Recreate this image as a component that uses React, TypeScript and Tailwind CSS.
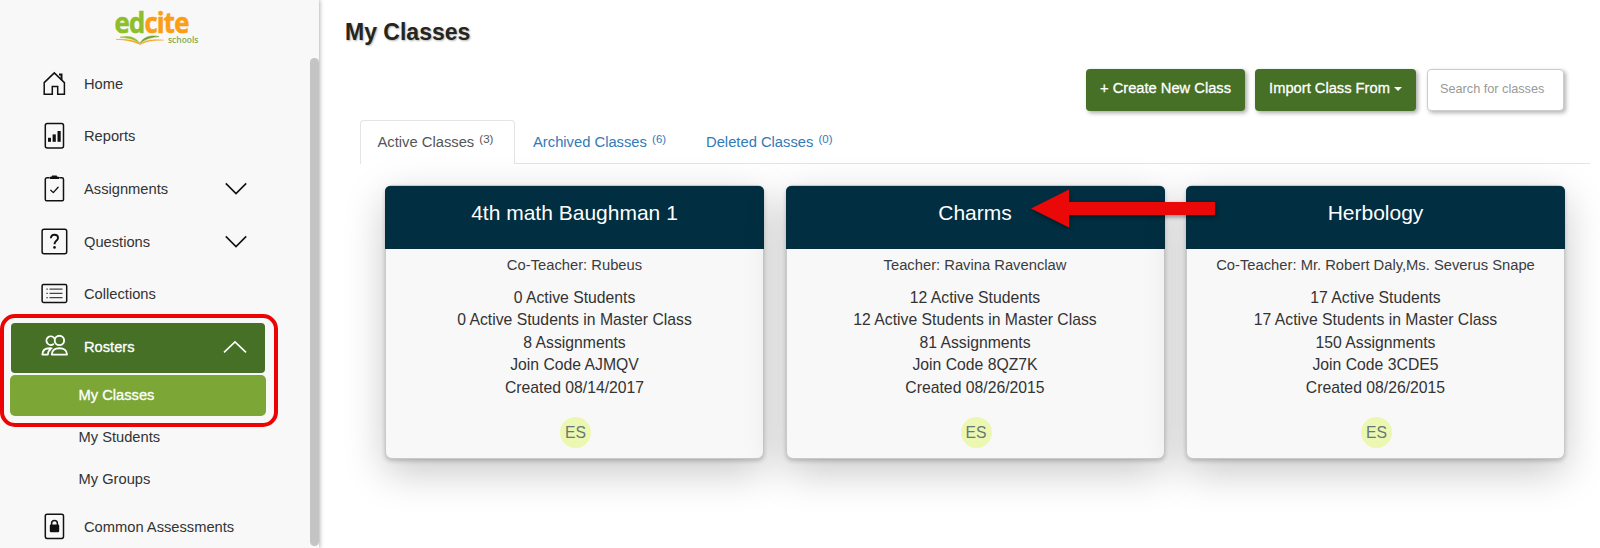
import type { ReactNode } from 'react';

const outline = {
  fill: 'none',
  stroke: 'currentColor',
  strokeWidth: 1.5,
  strokeLinecap: 'round',
  strokeLinejoin: 'round',
} as const;

const HomeIcon = () => (
  <svg width="28" height="28" viewBox="0 0 28 28" {...outline} strokeLinecap="butt" strokeLinejoin="miter">
    <path d="M4.2 12.6 14.3 2.9l10.1 9.7v11.6h-6.7v-7.6h-5.4v7.6H4.2z" />
    <path d="M19 4.6h2.5v5.4" strokeWidth="2" />
  </svg>
);

const ReportsIcon = () => (
  <svg width="28" height="28" viewBox="0 0 28 28" {...outline}>
    <rect x="5.3" y="1.4" width="18.2" height="24.6" rx="2" />
    <g fill="currentColor" stroke="none">
      <rect x="8" y="15.8" width="3" height="4" />
      <rect x="12.6" y="12.4" width="3.2" height="7.4" />
      <rect x="17.5" y="9" width="3.2" height="10.8" />
    </g>
  </svg>
);

const AssignmentsIcon = () => (
  <svg width="28" height="28" viewBox="0 0 28 28" {...outline}>
    <path d="M9 2.8H7a1.7 1.7 0 0 0-1.7 1.7v20a1.2 1.2 0 0 0 1.2 1.2h15.8a1.2 1.2 0 0 0 1.2-1.2v-20a1.7 1.7 0 0 0-1.7-1.7h-2" />
    <path d="M9.8 4.1V1.8h1.6l.8-1.2h4.4l.8 1.2h1.6v2.3z" fill="currentColor" stroke="none" />
    <path d="M10.8 15.2l2.5 2.4 4.8-5.4" strokeWidth="1.3" />
  </svg>
);

const QuestionsIcon = () => (
  <svg width="28" height="28" viewBox="0 0 28 28" {...outline}>
    <rect x="2.1" y="1.3" width="24.6" height="24.4" rx="2" />
    <path d="M10.9 10.2c0-2.1 1.3-3.5 3.5-3.5s3.6 1.3 3.6 3.2c0 2.9-3.5 3-3.5 6.3" strokeWidth="1.9" strokeLinecap="butt" />
    <circle cx="14.5" cy="19.4" r="1.3" fill="currentColor" stroke="none" />
  </svg>
);

const CollectionsIcon = () => (
  <svg width="28" height="28" viewBox="0 0 28 28" {...outline}>
    <rect x="2.1" y="4.5" width="24.6" height="18" rx="1.4" />
    <g strokeWidth="1.2" strokeLinecap="butt" className="text-[#444]">
      <path d="M9.5 9.2h13M9.5 13.4h13M9.5 17.6h13" />
      <path d="M6.4 9.2h1.4M6.4 13.4h1.4M6.4 17.6h1.4" />
    </g>
  </svg>
);

const RostersIcon = () => (
  <svg width="28" height="28" viewBox="0 0 28 28" {...outline} strokeWidth="1.9">
    <circle cx="19.4" cy="7.4" r="4.7" />
    <path d="M13.2 11.200a4.300 4.300 0 1 1 .8-6.400" />
    <path d="M11.800 21.600c0-4.200 3.300-6.400 7.600-6.400s7.600 2.200 7.600 6.400z" />
    <path d="M11.600 15.400c-.6-.1-1.200-.2-1.800-.2-4.300 0-7.400 2.200-7.400 6.400h5.400c0-2 .8-3.800 2.400-5" />
  </svg>
);

const AssessmentsIcon = () => (
  <svg width="28" height="28" viewBox="0 0 28 28" {...outline}>
    <rect x="5.3" y="1.2" width="18.2" height="24.2" rx="1.8" />
    <rect x="9.8" y="11.6" width="9.4" height="7.6" rx="1.2" fill="currentColor" stroke="none" />
    <path d="M11.6 12v-1.6a2.900 2.900 0 0 1 5.800 0V12" />
  </svg>
);

const Chevron = ({ up = false }: { up?: boolean }) => (
  <svg width="24" height="14" viewBox="0 0 24 14" {...outline} strokeWidth="1.6" strokeLinecap="butt" strokeLinejoin="miter">
    <path d={up ? 'M1 12.4 12 1.8l11 10.6' : 'M1.8 1.4 12 11.6 22.2 1.4'} />
  </svg>
);

const Logo = () => (
  <svg width="94" height="46" viewBox="-4 -11 94 46" className="ml-[111px]">
    <g fontFamily="'Open Sans', 'Noto Sans', sans-serif" fontWeight="700">
      <text
        transform="translate(-0.4 22.4) scale(0.885 1)"
        fontSize="29"
        letterSpacing="-0.9"
        fill="#8fbe2b"
        stroke="#8fbe2b"
        strokeWidth="0.6"
        strokeLinejoin="round"
      >
        ed<tspan fill="#fb9e14" stroke="#fb9e14">cite</tspan>
      </text>
      <text x="53" y="32.400" fontSize="9" fontWeight="600" textLength="30.500" lengthAdjust="spacingAndGlyphs" fill="#86a94a">schools</text>
    </g>
    <path d="M5 26.2c8-1.8 15-.6 19.6 5.8-5-3.6-11-5-19.6-5.8z" fill="#8fbe2b" stroke="#8fbe2b" strokeWidth="0.5" />
    <path d="M25 32c3.6-6 11-8.4 19-6.4-8 .6-13.5 2.6-19 6.4z" fill="#6f9f25" stroke="#6f9f25" strokeWidth="0.5" />
    <path d="M1 28.4c10-.6 18 .8 24 4 6-3.4 14-4.600 23.500-3.200-10-.4-17.500 1-23.500 4.400-6-3.200-14-4.800-24-5.200z" fill="#fb9e14" stroke="#fb9e14" strokeWidth="0.4" />
  </svg>
);

type NavItemProps = {
  icon: ReactNode;
  label: string;
  expandable?: boolean;
};

const NavItem = ({ icon, label, expandable }: NavItemProps) => (
  <a href="#" className="flex h-[52.6px] shrink-0 items-center pl-10 text-[#333]">
    <span className="mr-4 text-[#111]">{icon}</span>
    <span className="w-[140px] whitespace-nowrap">{label}</span>
    {expandable && <span className="text-[#111]"><Chevron /></span>}
  </a>
);

const Sidebar = () => (
  <aside className="relative z-10 flex w-[319px] shrink-0 bg-[#f8f8f8] text-[14.7px] shadow-[1px_0_4px_rgba(0,0,0,0.3)]">
    <div className="flex w-[310px] flex-col">
      <div className="h-[57.5px] shrink-0">
        <Logo />
      </div>
      <NavItem icon={<HomeIcon />} label="Home" />
      <NavItem icon={<ReportsIcon />} label="Reports" />
      <NavItem icon={<AssignmentsIcon />} label="Assignments" expandable />
      <NavItem icon={<QuestionsIcon />} label="Questions" expandable />
      <NavItem icon={<CollectionsIcon />} label="Collections" />

      <div className="relative mt-[2.5px] shrink-0">
        <a href="#" className="ml-[11px] flex h-[50px] w-[254px] items-center rounded-[4px] bg-[#457026] pb-[2px] pl-[29px] text-white">
          <RostersIcon />
          <span className="ml-4 w-[139px] [-webkit-text-stroke:0.3px_white]">Rosters</span>
          <Chevron up />
        </a>
        <a href="#" className="mt-[1.6px] ml-[10px] flex h-[41.4px] w-[255.5px] items-center rounded-[5px] bg-[#7ca737] pl-[68.5px] text-white [-webkit-text-stroke:0.3px_white]">
          My Classes
        </a>
        <div className="pointer-events-none absolute -top-[9px] left-0 h-[113px] w-[278px] rounded-[15px] border-4 border-[#ec0404]" />
      </div>
      <a href="#" className="flex h-[42.3px] shrink-0 items-center pl-[78.5px] text-[#333]">My Students</a>
      <a href="#" className="flex h-[42.3px] shrink-0 items-center pl-[78.5px] text-[#333]">My Groups</a>
      <NavItem icon={<AssessmentsIcon />} label="Common Assessments" />
    </div>
    <div className="mt-[58px] h-[488px] w-[9px] rounded-full bg-[#c4c4c4]" />
  </aside>
);

type Classroom = {
  name: string;
  teacher: string;
  students: number;
  assignments: number;
  joinCode: string;
  created: string;
};

const classes: Classroom[] = [
  { name: '4th math Baughman 1', teacher: 'Co-Teacher: Rubeus', students: 0, assignments: 8, joinCode: 'AJMQV', created: '08/14/2017' },
  { name: 'Charms', teacher: 'Teacher: Ravina Ravenclaw', students: 12, assignments: 81, joinCode: '8QZ7K', created: '08/26/2015' },
  { name: 'Herbology', teacher: 'Co-Teacher: Mr. Robert Daly,Ms. Severus Snape', students: 17, assignments: 150, joinCode: '3CDE5', created: '08/26/2015' },
];

const ClassCard = ({ item }: { item: Classroom }) => (
  <article className="relative flex h-[274px] w-[379px] flex-col items-center rounded-[7px] border border-[#c9c9c9] bg-[#f8f8f8] text-center shadow-[0_2px_4px_rgba(0,0,0,0.2),0_13px_40px_rgba(0,0,0,0.22)]">
    <h2 className="-mx-px h-[62.5px] w-[379px] shrink-0 rounded-t-[5px] bg-[#012e40] pt-[12px] text-[21px] leading-[30px] text-white">
      {item.name}
    </h2>
    <p className="mt-[6px] text-[14.75px] leading-[21px] text-[#3c3c3c]">{item.teacher}</p>
    <div className="mt-[11px] text-[15.75px] leading-[22.5px] text-[#333]">
      <p>{item.students} Active Students</p>
      <p>{item.students} Active Students in Master Class</p>
      <p>{item.assignments} Assignments</p>
      <p>Join Code {item.joinCode}</p>
      <p>Created {item.created}</p>
    </div>
    <span className="mt-[18px] ml-[2px] flex size-[31px] items-center justify-center rounded-full bg-[#ecf8b1] text-[15.75px] text-[#66787a]">
      ES
    </span>
  </article>
);

const Tab = ({ label, count }: { label: string; count: number }) => (
  <a href="#" className="text-[14.75px] whitespace-nowrap">
    {label} <sup className="-top-[4px] ml-px text-[11.5px]">({count})</sup>
  </a>
);

const App = () => {
  return (
    <div className="flex h-[548px] w-[1600px] overflow-hidden bg-white font-['Liberation_Sans',Arial,sans-serif]">
      <Sidebar />
      <main className="flex w-[1281px] flex-col">
        <h1 className="mt-[17px] ml-[26px] text-[23px] leading-[30px] font-bold text-[#25251d] [text-shadow:1px_1px_2px_rgba(0,0,0,0.3)]">
          My Classes
        </h1>

        <div className="mt-[21.5px] flex h-[42px] justify-end pr-[36px] text-[14.7px]">
          <button className="mr-[10px] w-[159px] rounded-[4px] bg-[#457026] pb-[3px] text-white shadow-[2px_2px_4px_rgba(0,0,0,0.35)] [-webkit-text-stroke:0.3px_white]">
            + Create New Class
          </button>
          <button className="mr-[11px] flex w-[161px] items-center justify-center rounded-[4px] bg-[#457026] pb-[3px] text-white shadow-[2px_2px_4px_rgba(0,0,0,0.35)] [-webkit-text-stroke:0.3px_white]">
            Import Class From
            <span className="mt-[2px] ml-[4px] border-x-4 border-t-4 border-x-transparent border-t-white" />
          </button>
          <input
            className="w-[137px] rounded-[4px] border border-[#ccc] bg-white px-[12px] text-[12.7px] shadow-[2px_2px_4px_rgba(0,0,0,0.3)] placeholder:text-[#999]"
            placeholder="Search for classes"
          />
        </div>

        <nav className="mt-[9.5px] mr-[10px] ml-[41px] flex h-[44px] text-[#337ab7]">
          <div className="w-[154.5px] rounded-t-[4px] border border-b-0 border-[#e4e4e4] pt-[9px] pl-[16.5px] text-[#555]">
            <Tab label="Active Classes" count={3} />
          </div>
          <div className="flex flex-1 border-b border-[#e4e4e4] pt-[10px] pl-[18.5px]">
            <div className="w-[173px]">
              <Tab label="Archived Classes" count={6} />
            </div>
            <div>
              <Tab label="Deleted Classes" count={0} />
            </div>
          </div>
        </nav>

        <section className="relative mt-[21px] ml-[66px] flex gap-[21.5px]">
          {classes.map((item) => (
            <ClassCard key={item.name} item={item} />
          ))}
          {/* callout pointing at the class name */}
          <svg
            className="pointer-events-none absolute top-[4px] left-[646px] drop-shadow-[1px_2px_2px_rgba(0,0,0,0.4)]"
            width="184"
            height="39"
            viewBox="0 0 184 39"
          >
            <path d="M0 19.500 38 .5V13h146v13H38v12.500z" fill="#ea0808" />
          </svg>
        </section>
      </main>
    </div>
  );
};

export default App;
